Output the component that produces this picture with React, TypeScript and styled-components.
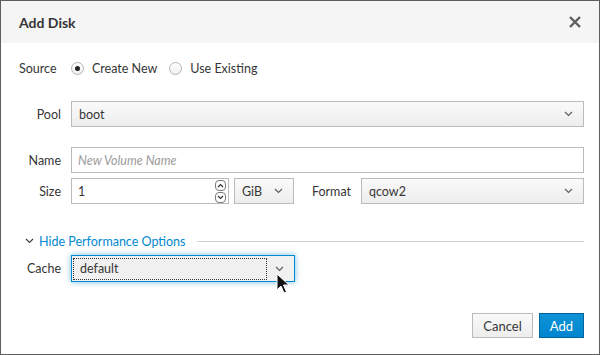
import React from "react";
import styled, { createGlobalStyle } from "styled-components";

const Global = createGlobalStyle`
  html, body { margin: 0; padding: 0; background: #fff; }
  * { box-sizing: border-box; }
  body { font-family: Lato, "Open Sans", sans-serif; font-size: 12px; color: #363636; }
`;

const Frame = styled.div`
  width: 600px;
  height: 355px;
  border: 1px solid #5f5f5f;
  background: #fff;
  display: flex;
  flex-direction: column;
  position: relative;
  overflow: hidden;
`;

const Header = styled.div`
  height: 42px;
  background: #f5f5f5;
  display: flex;
  align-items: center;
  justify-content: space-between;
  padding: 0 16px 0 18px;
`;

const Title = styled.h1`
  margin: 0;
  font-size: 14px;
  font-weight: 700;
  color: #363636;
`;

const Close = styled.button`
  border: 0;
  background: none;
  padding: 0;
  width: 16px;
  height: 16px;
  display: flex;
  align-items: center;
  justify-content: center;
`;

const Body = styled.div`
  flex: 1;
  display: flex;
  flex-direction: column;
  padding: 0 15px 0 18px;
`;

const Row = styled.div<{ $mt: number; $h?: number }>`
  display: flex;
  align-items: center;
  gap: 10px;
  margin-top: ${(p) => p.$mt}px;
  height: ${(p) => p.$h ?? 26}px;
`;

const Label = styled.label<{ $w?: number; $left?: boolean }>`
  width: ${(p) => p.$w ?? 42}px;
  flex: none;
  text-align: ${(p) => (p.$left ? "left" : "right")};
  font-size: 12.5px;
  color: #363636;
`;

const RadioGroup = styled.div`
  display: flex;
  align-items: center;
  gap: 12px;
`;

const RadioOpt = styled.label`
  display: flex;
  align-items: center;
  gap: 8px;
  font-size: 12.5px;
`;

const RadioCircle = styled.span<{ $on?: boolean }>`
  width: 13px;
  height: 13px;
  border-radius: 50%;
  border: 1px solid #b4b4b4;
  background: linear-gradient(#fff, #f0f0f0);
  display: flex;
  align-items: center;
  justify-content: center;
  &::after {
    content: "";
    width: 5px;
    height: 5px;
    border-radius: 50%;
    background: #222;
    display: ${(p) => (p.$on ? "block" : "none")};
  }
`;

const SelectBox = styled.div<{ $w?: number; $focus?: boolean }>`
  ${(p) => (p.$w ? `width: ${p.$w}px; flex: none;` : "flex: 1;")}
  height: 26px;
  border: 1px solid ${(p) => (p.$focus ? "#0088ce" : "#bbb")};
  background: ${(p) => (p.$focus ? "#f1f1f1" : "linear-gradient(#fafafa, #ededed)")};
  box-shadow: ${(p) => (p.$focus ? "0 0 6px rgba(0,136,206,0.55)" : "none")};
  display: flex;
  align-items: center;
  padding: 0 10px 0 7px;
  font-size: 12.5px;
  color: #363636;
  position: relative;
`;

const SelectText = styled.span<{ $focus?: boolean }>`
  flex: 1;
  ${(p) =>
    p.$focus
      ? `border: 1px dotted #333; margin: 0 8px 0 -6px; padding: 0 0 0 6px; height: 22px; display: flex; align-items: center;`
      : ""}
`;

const Input = styled.div<{ $w?: number }>`
  ${(p) => (p.$w ? `width: ${p.$w}px; flex: none;` : "flex: 1;")}
  height: 26px;
  border: 1px solid #bbb;
  background: #fff;
  display: flex;
  align-items: center;
  padding: 0 2px 0 6px;
  font-size: 12.5px;
  color: #363636;
`;

const Placeholder = styled.span`
  color: #9c9c9c;
  font-style: italic;
`;

const Spinner = styled.div`
  margin-left: auto;
  display: flex;
  flex-direction: column;
  gap: 1px;
`;

const SpinBtn = styled.span`
  width: 11px;
  height: 11px;
  border: 1px solid #7a7a7a;
  border-radius: 4px;
  display: flex;
  align-items: center;
  justify-content: center;
  background: #fff;
`;

const Toggle = styled.div`
  display: flex;
  align-items: center;
  margin-top: 25px;
  padding-left: 6px;
  height: 24px;
  color: #0088ce;
  font-size: 12.5px;
  gap: 5px;
`;

const Rule = styled.div`
  flex: 1;
  height: 1px;
  background: #d1d1d1;
  margin-left: 6px;
`;

const Footer = styled.div`
  display: flex;
  justify-content: flex-end;
  gap: 6px;
  margin-top: auto;
  padding: 0 0 16px 0;
`;

const Btn = styled.button<{ $primary?: boolean }>`
  height: 25px;
  min-width: ${(p) => (p.$primary ? 43 : 60)}px;
  padding: 0 10px;
  font-family: inherit;
  font-size: 13px;
  border: 1px solid ${(p) => (p.$primary ? "#00659c" : "#bbb")};
  background: ${(p) => (p.$primary ? "linear-gradient(#0f93d6, #0085cf)" : "linear-gradient(#fafafa, #ededed)")};
  color: ${(p) => (p.$primary ? "#fff" : "#363636")};
`;

const Cursor = styled.svg`
  position: absolute;
  left: 275px;
  top: 272px;
`;

const Chevron = ({ c = "#5a5a5a" }: { c?: string }) => (
  <svg width="9" height="6" viewBox="0 0 9 6">
    <path d="M1 1 L4.5 4.5 L8 1" fill="none" stroke={c} strokeWidth="1.1" />
  </svg>
);

export default function App() {
  return (
    <>
      <Global />
      <Frame>
        <Header>
          <Title>Add Disk</Title>
          <Close aria-label="Close">
            <svg width="14" height="14" viewBox="0 0 14 14">
              <path d="M2 2 L12 12 M12 2 L2 12" stroke="#5d5d5d" strokeWidth="2.4" />
            </svg>
          </Close>
        </Header>
        <Body>
          <Row $mt={12}>
            <Label $w={42} $left>Source</Label>
            <RadioGroup>
              <RadioOpt><RadioCircle $on />Create New</RadioOpt>
              <RadioOpt><RadioCircle />Use Existing</RadioOpt>
            </RadioGroup>
          </Row>
          <Row $mt={20}>
            <Label>Pool</Label>
            <SelectBox>
              <SelectText>boot</SelectText>
              <Chevron />
            </SelectBox>
          </Row>
          <Row $mt={20}>
            <Label>Name</Label>
            <Input>
              <Placeholder>New Volume Name</Placeholder>
            </Input>
          </Row>
          <Row $mt={5}>
            <Label>Size</Label>
            <Input $w={158}>
              1
              <Spinner>
                <SpinBtn>
                  <svg width="7" height="5" viewBox="0 0 7 5"><path d="M1 4 L3.5 1.5 L6 4" fill="none" stroke="#333" strokeWidth="1.2" /></svg>
                </SpinBtn>
                <SpinBtn>
                  <svg width="7" height="5" viewBox="0 0 7 5"><path d="M1 1 L3.5 3.5 L6 1" fill="none" stroke="#333" strokeWidth="1.2" /></svg>
                </SpinBtn>
              </Spinner>
            </Input>
            <SelectBox $w={60} style={{ marginLeft: -5 }}>
              <SelectText>GiB</SelectText>
              <Chevron />
            </SelectBox>
            <Label $w={47}>Format</Label>
            <SelectBox>
              <SelectText>qcow2</SelectText>
              <Chevron />
            </SelectBox>
          </Row>
          <Toggle>
            <Chevron c="#363636" />
            <span>Hide Performance Options</span>
            <Rule />
          </Toggle>
          <Row $mt={2} $h={27}>
            <Label>Cache</Label>
            <SelectBox $w={224} $focus style={{ height: 27 }}>
              <SelectText $focus>default</SelectText>
              <Chevron />
            </SelectBox>
          </Row>
          <Footer>
            <Btn>Cancel</Btn>
            <Btn $primary>Add</Btn>
          </Footer>
        </Body>
        <Cursor width="14" height="22" viewBox="0 0 14 22">
          <path d="M1 1 L1 17 L5 13 L8 20 L10.5 19 L7.5 12 L13 12 Z" fill="#111" stroke="#fff" strokeWidth="1" />
        </Cursor>
      </Frame>
    </>
  );
}
